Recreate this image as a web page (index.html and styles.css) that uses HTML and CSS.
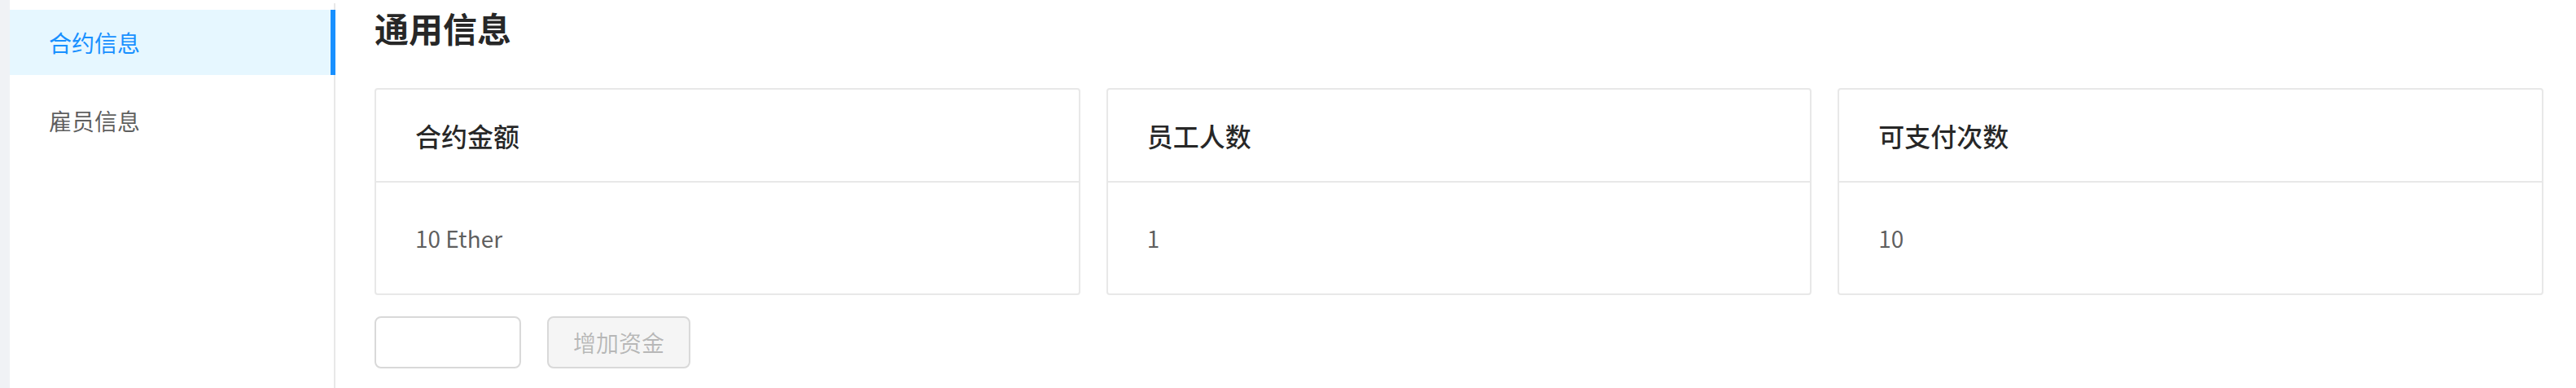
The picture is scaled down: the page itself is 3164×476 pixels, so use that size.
FILE: index.html
```html
<!DOCTYPE html>
<html lang="zh-CN">
<head>
<meta charset="utf-8">
<title>合约信息</title>
<link rel="stylesheet" href="styles.css">
</head>
<body>
<div class="layout">
  <aside class="sider">
    <ul class="menu">
      <li class="menu-item selected">合约信息</li>
      <li class="menu-item">雇员信息</li>
    </ul>
  </aside>
  <main class="content">
    <h4 class="title">通用信息</h4>
    <div class="cards">
      <div class="card">
        <div class="card-head">合约金额</div>
        <div class="card-body">10 Ether</div>
      </div>
      <div class="card">
        <div class="card-head">员工人数</div>
        <div class="card-body">1</div>
      </div>
      <div class="card">
        <div class="card-head">可支付次数</div>
        <div class="card-body">10</div>
      </div>
    </div>
    <div class="actions">
      <input class="input" type="text">
      <button class="btn" disabled>增加资金</button>
    </div>
  </main>
</div>
</body>
</html>
```

FILE: styles.css
```css
* { box-sizing: border-box; }
html, body {
  margin: 0;
  padding: 0;
  background: #fff;
  font-family: "Noto Sans CJK SC", "Noto Sans", sans-serif;
  color: rgba(0, 0, 0, 0.65);
}
.layout {
  display: flex;
  height: 476px;
  background: #f0f2f5;
  padding-left: 12px;
}
.sider {
  width: 400px;
  flex: none;
  background: #fff;
  padding-top: 4px;
  display: flex;
  flex-direction: column;
}
.menu {
  list-style: none;
  margin: 0;
  padding: 8px 0 0 0;
  flex: 1;
  border-right: 2px solid #e8e8e8;
}
.menu-item {
  height: 80px;
  line-height: 80px;
  padding-left: 48px;
  margin-right: -2px;
  margin-bottom: 16px;
  font-size: 28px;
  color: rgba(0, 0, 0, 0.65);
}
.menu-item.selected {
  background: #e6f7ff;
  color: #1890ff;
  box-shadow: inset -6px 0 0 #1890ff;
}
.content {
  flex: 1;
  background: #fff;
  padding: 0 40px 0 48px;
}
.title {
  margin: 4px 0 44px 0;
  font-size: 42px;
  line-height: 60px;
  font-weight: 700;
  color: rgba(0, 0, 0, 0.85);
}
.cards {
  display: grid;
  grid-template-columns: repeat(3, 1fr);
  gap: 32px;
}
.card {
  border: 2px solid #e8e8e8;
  border-radius: 4px;
  background: #fff;
}
.card-head {
  padding: 32px 48px;
  line-height: 48px;
  font-size: 32px;
  font-weight: 500;
  color: rgba(0, 0, 0, 0.85);
  border-bottom: 2px solid #e8e8e8;
}
.card-body {
  padding: 48px;
  line-height: 40px;
  font-size: 28px;
  color: rgba(0, 0, 0, 0.65);
}
.actions {
  display: flex;
  gap: 32px;
  margin-top: 26px;
}
.input {
  width: 180px;
  height: 64px;
  border: 2px solid #d9d9d9;
  border-radius: 8px;
  background: #fff;
  padding: 0 22px;
  font-size: 28px;
  font-family: inherit;
  outline: none;
}
.btn {
  height: 64px;
  padding: 0 30px;
  border: 2px solid #d9d9d9;
  border-radius: 8px;
  background: #f5f5f5;
  color: rgba(0, 0, 0, 0.25);
  font-size: 28px;
  font-family: inherit;
  line-height: 60px;
}
```
